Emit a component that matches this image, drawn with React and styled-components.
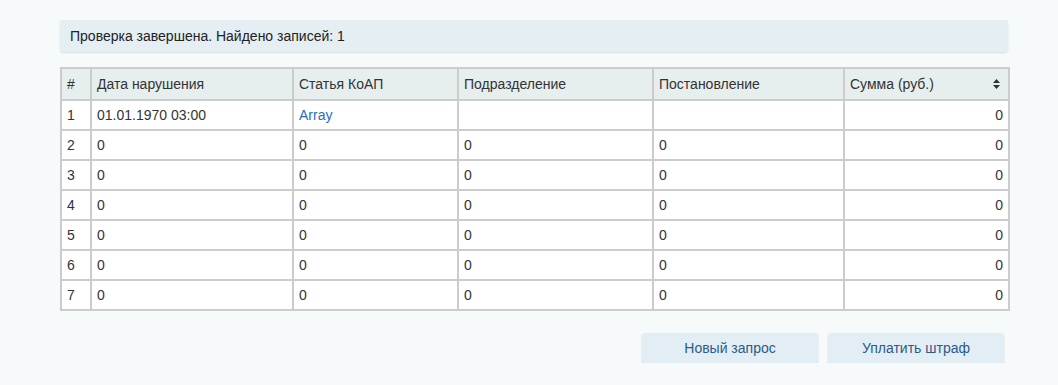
import React from "react";
import styled, { createGlobalStyle } from "styled-components";

const GlobalStyle = createGlobalStyle`
  body {
    margin: 0;
    background: #f7fafb;
    font-family: "Liberation Sans", Arial, sans-serif;
    font-size: 14px;
    color: #333;
  }
`;

const Page = styled.div`
  width: 948px;
  padding: 20px 0 0 60px;
`;

const Alert = styled.div`
  height: 32px;
  display: flex;
  align-items: center;
  padding: 0 10px;
  background: #e4eef3;
  border-radius: 3px;
  box-shadow: 0 1px 2px rgba(0, 0, 0, 0.12);
  color: #222;
`;

const Table = styled.table`
  margin-top: 15px;
  width: 948px;
  table-layout: fixed;
  border-collapse: collapse;
  border: 2px solid #cccccc;
  background: #fff;
`;

const Th = styled.th`
  height: 30px;
  padding: 0 5px;
  text-align: left;
  font-weight: normal;
  background: #e6eeee;
  border: 2px solid #cccccc;
  color: #333;
  position: relative;
`;

const Td = styled.td`
  height: 28px;
  padding: 0 5px;
  border: 2px solid #cccccc;
  text-align: ${(p) => (p.$right ? "right" : "left")};
  color: #333;
`;

const Link = styled.a`
  color: #2a6ebb;
  text-decoration: none;
`;

const SortIcon = styled.svg`
  position: absolute;
  right: 8px;
  top: 50%;
  margin-top: -5px;
`;

const Actions = styled.div`
  display: flex;
  justify-content: flex-end;
  gap: 10px;
  margin-top: 22px;
  padding-right: 4px;
`;

const Button = styled.button`
  width: 176px;
  height: 30px;
  border: none;
  border-radius: 3px;
  background: #e3eef4;
  box-shadow: 0 1px 2px rgba(0, 0, 0, 0.15);
  font-family: inherit;
  font-size: 14px;
  color: #2c5a8c;
  cursor: pointer;
`;

const widths = [30, 202, 165, 195, 191, 165];
const rows = [2, 3, 4, 5, 6, 7];

export default function App() {
  return (
    <Page>
      <GlobalStyle />
      <Alert>Проверка завершена. Найдено записей: 1</Alert>
      <Table>
        <colgroup>
          {widths.map((w, i) => (
            <col key={i} style={{ width: w }} />
          ))}
        </colgroup>
        <thead>
          <tr>
            <Th>#</Th>
            <Th>Дата нарушения</Th>
            <Th>Статья КоАП</Th>
            <Th>Подразделение</Th>
            <Th>Постановление</Th>
            <Th>
              Сумма (руб.)
              <SortIcon width="7" height="10" viewBox="0 0 7 10">
                <path d="M3.5 0 L7 4 L0 4 Z M0 6 L7 6 L3.5 10 Z" fill="#333" />
              </SortIcon>
            </Th>
          </tr>
        </thead>
        <tbody>
          <tr>
            <Td>1</Td>
            <Td>01.01.1970 03:00</Td>
            <Td>
              <Link href="#">Array</Link>
            </Td>
            <Td></Td>
            <Td></Td>
            <Td $right>0</Td>
          </tr>
          {rows.map((n) => (
            <tr key={n}>
              <Td>{n}</Td>
              <Td>0</Td>
              <Td>0</Td>
              <Td>0</Td>
              <Td>0</Td>
              <Td $right>0</Td>
            </tr>
          ))}
        </tbody>
      </Table>
      <Actions>
        <Button>Новый запрос</Button>
        <Button>Уплатить штраф</Button>
      </Actions>
    </Page>
  );
}
